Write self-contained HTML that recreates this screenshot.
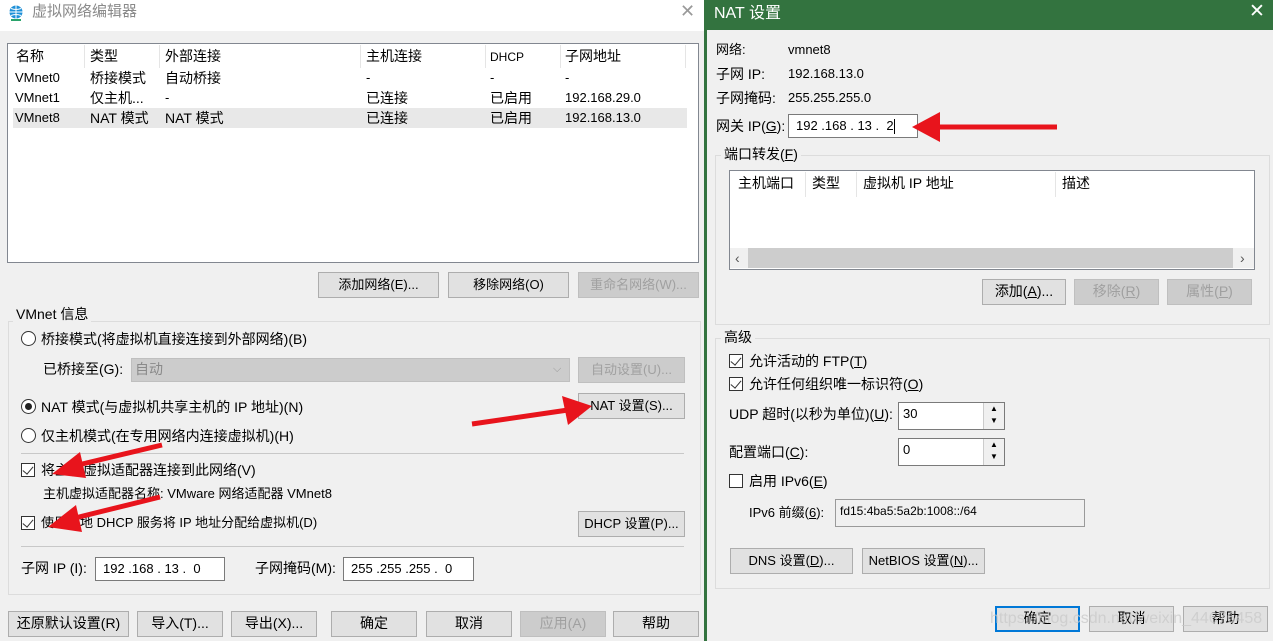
<!DOCTYPE html>
<html><head><meta charset="utf-8"><style>
*{margin:0;padding:0;box-sizing:border-box}
body{width:1273px;height:641px;position:relative;overflow:hidden;background:#f0f0f0;font-family:"Liberation Sans","Noto Sans CJK SC",sans-serif;font-size:13px;color:#000}
.a{position:absolute;white-space:nowrap;line-height:16px}
.box{position:absolute}
.btn{position:absolute;background:#e1e1e1;border:1px solid #adadad;text-align:center;line-height:23px;font-size:13px}
.dis{color:#a0a0a0;background:#cccccc;border-color:#bfbfbf}
.grp{position:absolute;border:1px solid #dcdcdc}
.inp{position:absolute;background:#fff;border:1px solid #7a7a7a;line-height:21px;padding-left:7px}
.rad{position:absolute;width:15px;height:15px;border:1px solid #333;border-radius:50%;background:#fff}
.chk{position:absolute;width:14px;height:14px;border:1px solid #333;background:#fff}
.chk.on::after{content:"";position:absolute;left:3px;top:0px;width:5px;height:9px;border:solid #333;border-width:0 1.5px 1.5px 0;transform:rotate(40deg)}
.sep{position:absolute;height:1px;background:#a0a0a0}
.vs{position:absolute;width:1px;background:#e5e5e5}
</style></head><body>
<!-- LEFT WINDOW -->
<div class="box" style="left:0;top:0;width:705px;height:31px;background:#fff"></div>
<svg class="box" style="left:7px;top:4px" width="18" height="18" viewBox="0 0 18 18"><circle cx="9" cy="8" r="6.5" fill="#1e90d8"/><path d="M2.5 8h13M9 1.5v13M4 4.5q5 2 10 0M4 11.5q5-2 10 0" stroke="#fff" stroke-width="1" fill="none"/><rect x="4" y="15" width="10" height="2" fill="#2aa36b"/></svg>
<div class="a" style="left:32px;top:4px;font-size:15px;color:#8a8a8a">虚拟网络编辑器</div>
<div class="a" style="left:680px;top:3px;font-size:18px;color:#999">✕</div>
<div class="box" style="left:704px;top:0;width:3px;height:641px;background:#33733f"></div>

<div class="box" style="left:7px;top:43px;width:692px;height:220px;background:#fff;border:1px solid #828790"></div>
<div class="vs" style="left:84px;top:45px;height:23px"></div>
<div class="vs" style="left:159px;top:45px;height:23px"></div>
<div class="vs" style="left:360px;top:45px;height:23px"></div>
<div class="vs" style="left:485px;top:45px;height:23px"></div>
<div class="vs" style="left:560px;top:45px;height:23px"></div>
<div class="vs" style="left:685px;top:45px;height:23px"></div>
<div class="a" style="left:16px;top:48px;font-size:14px">名称</div>
<div class="a" style="left:90px;top:48px;font-size:14px">类型</div>
<div class="a" style="left:165px;top:48px;font-size:14px">外部连接</div>
<div class="a" style="left:366px;top:48px;font-size:14px">主机连接</div>
<div class="a" style="left:490px;top:49px;font-size:12px">DHCP</div>
<div class="a" style="left:565px;top:48px;font-size:14px">子网地址</div>
<div class="box" style="left:13px;top:108px;width:674px;height:20px;background:#e8e8e8"></div>
<div class="a" style="left:15px;top:70px">VMnet0</div><div class="a" style="left:90px;top:70px;font-size:14px">桥接模式</div><div class="a" style="left:165px;top:70px;font-size:14px">自动桥接</div><div class="a" style="left:366px;top:70px">-</div><div class="a" style="left:490px;top:70px">-</div><div class="a" style="left:565px;top:70px">-</div>
<div class="a" style="left:15px;top:90px">VMnet1</div><div class="a" style="left:90px;top:90px;font-size:14px">仅主机...</div><div class="a" style="left:165px;top:90px">-</div><div class="a" style="left:366px;top:90px;font-size:14px">已连接</div><div class="a" style="left:490px;top:90px;font-size:14px">已启用</div><div class="a" style="left:565px;top:90px">192.168.29.0</div>
<div class="a" style="left:15px;top:110px">VMnet8</div><div class="a" style="left:90px;top:110px;font-size:14px">NAT 模式</div><div class="a" style="left:165px;top:110px;font-size:14px">NAT 模式</div><div class="a" style="left:366px;top:110px;font-size:14px">已连接</div><div class="a" style="left:490px;top:110px;font-size:14px">已启用</div><div class="a" style="left:565px;top:110px">192.168.13.0</div>

<div class="btn" style="left:318px;top:272px;width:121px;height:26px">添加网络(E)...</div>
<div class="btn" style="left:448px;top:272px;width:121px;height:26px">移除网络(O)</div>
<div class="btn dis" style="left:578px;top:272px;width:121px;height:26px">重命名网络(W)...</div>

<div class="grp" style="left:8px;top:321px;width:693px;height:274px"></div>
<div class="a" style="left:13px;top:306px;background:#f0f0f0;padding:0 3px;font-size:14px">VMnet 信息</div>
<div class="rad" style="left:21px;top:331px"></div>
<div class="a" style="left:41px;top:331px;font-size:14px">桥接模式(将虚拟机直接连接到外部网络)(B)</div>
<div class="a" style="left:43px;top:361px;font-size:14px">已桥接至(G):</div>
<div class="box" style="left:131px;top:358px;width:439px;height:24px;background:#cccccc;border:1px solid #bfbfbf"></div>
<div class="a" style="left:135px;top:361px;color:#8a8a8a;font-size:14px">自动</div>
<div class="a" style="left:553px;top:361px;color:#999;font-size:11px">⌵</div>
<div class="btn dis" style="left:578px;top:357px;width:107px;height:26px">自动设置(U)...</div>
<div class="rad" style="left:21px;top:399px"><div style="position:absolute;left:3px;top:3px;width:7px;height:7px;border-radius:50%;background:#222"></div></div>
<div class="a" style="left:41px;top:399px;font-size:14px">NAT 模式(与虚拟机共享主机的 IP 地址)(N)</div>
<div class="btn" style="left:578px;top:393px;width:107px;height:26px">NAT 设置(S)...</div>
<div class="rad" style="left:21px;top:428px"></div>
<div class="a" style="left:41px;top:428px;font-size:14px">仅主机模式(在专用网络内连接虚拟机)(H)</div>
<div class="sep" style="left:21px;top:453px;width:663px;background:#c8c8c8"></div>
<div class="chk on" style="left:21px;top:463px"></div>
<div class="a" style="left:41px;top:462px;font-size:14px">将主机虚拟适配器连接到此网络(V)</div>
<div class="a" style="left:43px;top:486px;font-size:13px">主机虚拟适配器名称: VMware 网络适配器 VMnet8</div>
<div class="chk on" style="left:21px;top:516px"></div>
<div class="a" style="left:41px;top:515px;font-size:13px">使用本地 DHCP 服务将 IP 地址分配给虚拟机(D)</div>
<div class="btn" style="left:578px;top:511px;width:107px;height:26px">DHCP 设置(P)...</div>
<div class="sep" style="left:21px;top:546px;width:663px;background:#c8c8c8"></div>
<div class="a" style="left:21px;top:560px;font-size:14px">子网 IP (I):</div>
<div class="inp" style="left:95px;top:557px;width:130px;height:24px">192 .168 . 13 .&nbsp; 0</div>
<div class="a" style="left:255px;top:560px;font-size:14px">子网掩码(M):</div>
<div class="inp" style="left:343px;top:557px;width:131px;height:24px">255 .255 .255 .&nbsp; 0</div>

<div class="btn" style="left:8px;top:611px;width:121px;height:26px;font-size:14px">还原默认设置(R)</div>
<div class="btn" style="left:137px;top:611px;width:86px;height:26px;font-size:14px">导入(T)...</div>
<div class="btn" style="left:231px;top:611px;width:86px;height:26px;font-size:14px">导出(X)...</div>
<div class="btn" style="left:331px;top:611px;width:86px;height:26px;font-size:14px">确定</div>
<div class="btn" style="left:426px;top:611px;width:86px;height:26px;font-size:14px">取消</div>
<div class="btn dis" style="left:520px;top:611px;width:86px;height:26px;font-size:14px">应用(A)</div>
<div class="btn" style="left:613px;top:611px;width:86px;height:26px;font-size:14px">帮助</div>

<!-- RIGHT WINDOW -->
<div class="box" style="left:707px;top:0;width:566px;height:30px;background:#33733f"></div>
<div class="a" style="left:714px;top:4px;color:#fff;font-size:16px;line-height:20px">NAT 设置</div>
<div class="a" style="left:1249px;top:2px;color:#fff;font-size:19px;line-height:20px">✕</div>

<div class="a" style="left:716px;top:42px">网络:</div><div class="a" style="left:788px;top:42px">vmnet8</div>
<div class="a" style="left:716px;top:66px;font-size:14px">子网 IP:</div><div class="a" style="left:788px;top:66px">192.168.13.0</div>
<div class="a" style="left:716px;top:90px;font-size:14px">子网掩码:</div><div class="a" style="left:788px;top:90px">255.255.255.0</div>
<div class="a" style="left:716px;top:118px;font-size:14px">网关 IP(<u>G</u>):</div>
<div class="inp" style="left:788px;top:114px;width:130px;height:24px">192 .168 . 13 .&nbsp; 2<span style="display:inline-block;width:1px;height:15px;background:#000;vertical-align:middle"></span></div>

<div class="grp" style="left:715px;top:155px;width:555px;height:170px"></div>
<div class="a" style="left:721px;top:146px;background:#f0f0f0;padding:0 3px;font-size:14px">端口转发(<u>F</u>)</div>
<div class="box" style="left:729px;top:170px;width:526px;height:100px;background:#fff;border:1px solid #828790"></div>
<div class="vs" style="left:805px;top:172px;height:25px"></div>
<div class="vs" style="left:856px;top:172px;height:25px"></div>
<div class="vs" style="left:1055px;top:172px;height:25px"></div>
<div class="a" style="left:738px;top:175px;font-size:14px">主机端口</div>
<div class="a" style="left:812px;top:175px;font-size:14px">类型</div>
<div class="a" style="left:863px;top:175px;font-size:14px">虚拟机 IP 地址</div>
<div class="a" style="left:1062px;top:175px;font-size:14px">描述</div>
<div class="box" style="left:730px;top:248px;width:524px;height:20px;background:#f0f0f0"></div>
<div class="box" style="left:748px;top:248px;width:485px;height:20px;background:#cdcdcd"></div>
<div class="a" style="left:735px;top:250px;color:#555;font-size:14px">‹</div>
<div class="a" style="left:1240px;top:250px;color:#555;font-size:14px">›</div>
<div class="btn" style="left:982px;top:279px;width:84px;height:26px;font-size:14px">添加(<u>A</u>)...</div>
<div class="btn dis" style="left:1074px;top:279px;width:85px;height:26px;font-size:14px">移除(<u>R</u>)</div>
<div class="btn dis" style="left:1167px;top:279px;width:85px;height:26px;font-size:14px">属性(<u>P</u>)</div>

<div class="grp" style="left:715px;top:338px;width:555px;height:251px"></div>
<div class="a" style="left:721px;top:329px;background:#f0f0f0;padding:0 3px;font-size:14px">高级</div>
<div class="chk on" style="left:729px;top:354px"></div>
<div class="a" style="left:749px;top:353px;font-size:14px">允许活动的 FTP(<u>T</u>)</div>
<div class="chk on" style="left:729px;top:377px"></div>
<div class="a" style="left:749px;top:376px;font-size:14px">允许任何组织唯一标识符(<u>O</u>)</div>
<div class="a" style="left:729px;top:406px;font-size:14px">UDP 超时(以秒为单位)(<u>U</u>):</div>
<div class="inp" style="left:898px;top:402px;width:107px;height:28px;line-height:22px;padding-left:4px">30</div>
<div class="box" style="left:983px;top:403px;width:21px;height:26px;background:#f0f0f0;border-left:1px solid #ccc"><div style="font-size:8px;line-height:12px;text-align:center">▲<br>▼</div></div>
<div class="a" style="left:729px;top:444px;font-size:14px">配置端口(<u>C</u>):</div>
<div class="inp" style="left:898px;top:438px;width:107px;height:28px;line-height:22px;padding-left:4px">0</div>
<div class="box" style="left:983px;top:439px;width:21px;height:26px;background:#f0f0f0;border-left:1px solid #ccc"><div style="font-size:8px;line-height:12px;text-align:center">▲<br>▼</div></div>
<div class="chk" style="left:729px;top:474px"></div>
<div class="a" style="left:749px;top:473px;font-size:14px">启用 IPv6(<u>E</u>)</div>
<div class="a" style="left:749px;top:505px">IPv6 前缀(<u>6</u>):</div>
<div class="box" style="left:835px;top:499px;width:250px;height:28px;border:1px solid #9a9a9a;background:#f0f0f0;padding:3px 4px;font-size:12px;line-height:16px">fd15:4ba5:5a2b:1008::/64</div>
<div class="btn" style="left:730px;top:548px;width:123px;height:26px">DNS 设置(<u>D</u>)...</div>
<div class="btn" style="left:862px;top:548px;width:123px;height:26px">NetBIOS 设置(<u>N</u>)...</div>

<div class="btn" style="left:995px;top:606px;width:85px;height:26px;border:2px solid #0078d7;line-height:21px;font-size:14px">确定</div>
<div class="btn" style="left:1089px;top:606px;width:85px;height:26px;font-size:14px">取消</div>
<div class="btn" style="left:1183px;top:606px;width:85px;height:26px;font-size:14px">帮助</div>
<div class="a" style="left:990px;top:609px;font-size:16px;color:rgba(200,200,200,0.75);line-height:20px">https://blog.csdn.net/weixin_44676458</div>

<!-- ARROWS -->
<svg class="box" style="left:0;top:0" width="1273" height="641">
<g fill="#e8141c" stroke="#e8141c">
<line x1="1057" y1="127" x2="935" y2="127" stroke-width="5"/>
<polygon points="912,127 940,112 940,142" stroke="none"/>
<line x1="472" y1="424" x2="568" y2="410" stroke-width="5"/>
<polygon points="592,406 562,396 568,425" stroke="none"/>
<line x1="162" y1="445" x2="78" y2="465" stroke-width="5"/>
<polygon points="52,474 80,452 86,478" stroke="none"/>
<line x1="160" y1="497" x2="75" y2="518" stroke-width="5"/>
<polygon points="48,527 76,505 82,532" stroke="none"/>
</g>
</svg>
</body></html>
